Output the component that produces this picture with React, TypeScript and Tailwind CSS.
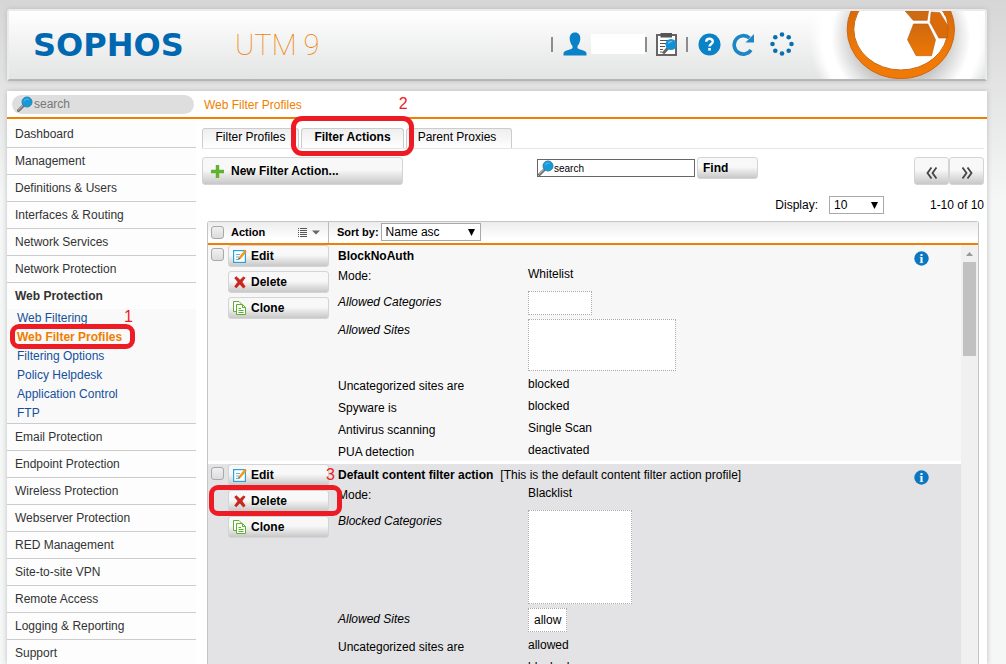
import type { ReactNode } from 'react'

interface Detail {
  label: string
  value?: string
  box?: string
}

interface FilterAction {
  id: string
  name: string
  note?: string
  details: Detail[]
  mark?: boolean
}

const actions: FilterAction[] = [
  {
    id: 'block-no-auth',
    name: 'BlockNoAuth',
    details: [
      { label: 'Mode:', value: 'Whitelist' },
      { label: 'Allowed Categories', box: 'h-6 w-16' },
      { label: 'Allowed Sites', box: 'h-[52px] w-[148px]' },
      { label: 'Uncategorized sites are', value: 'blocked' },
      { label: 'Spyware is', value: 'blocked' },
      { label: 'Antivirus scanning', value: 'Single Scan' },
      { label: 'PUA detection', value: 'deactivated' },
    ],
  },
  {
    id: 'default',
    name: 'Default content filter action',
    note: '[This is the default content filter action profile]',
    mark: true,
    details: [
      { label: 'Mode:', value: 'Blacklist' },
      { label: 'Blocked Categories', box: 'h-[94px] w-[104px]' },
      { label: 'Allowed Sites', box: 'h-6 px-[5px]', value: 'allow' },
      { label: 'Uncategorized sites are', value: 'allowed' },
      { label: 'Spyware is', value: 'blocked' },
    ],
  },
]

const menuTop = ['Dashboard', 'Management', 'Definitions & Users', 'Interfaces & Routing', 'Network Services', 'Network Protection']
const subMenu = ['Web Filtering', 'Web Filter Profiles', 'Filtering Options', 'Policy Helpdesk', 'Application Control', 'FTP']
const menuBottom = [
  'Email Protection',
  'Endpoint Protection',
  'Wireless Protection',
  'Webserver Protection',
  'RED Management',
  'Site-to-site VPN',
  'Remote Access',
  'Logging & Reporting',
  'Support',
]

const buttonBase = 'flex items-center rounded-[3px] border border-[#d4d4d4] bg-linear-to-b from-[#f8f8f8] from-45% to-[#c8c8c8]'
const buttonStyle = `${buttonBase} font-bold text-black`

function Magnifier() {
  return (
    <svg width="16" height="16" viewBox="0 0 16 16" className="shrink-0">
      <path d="M1.5 14.5 L6.5 9.5" stroke="#6f6f6f" strokeWidth="3" strokeLinecap="round" />
      <path d="M1.5 13.8 L6 9.4" stroke="#c9c9c9" strokeWidth="1" strokeLinecap="round" />
      <circle cx="10" cy="6" r="5" fill="#149ad8" stroke="#2a83b4" strokeWidth="1" />
      <path d="M6.5 6 A3.5 3.5 0 0 1 12.6 3.6 Q9 3.6 6.5 6" fill="#45b4e8" />
    </svg>
  )
}

function EditIcon() {
  return (
    <svg width="14" height="14" viewBox="0 0 14 14">
      <rect x=".6" y="1.6" width="11.8" height="11.8" fill="#fff" stroke="#2aa3dc" strokeWidth="1.2" />
      <path d="M3 5.5H7M3 8H6M3 10.5H5.5" stroke="#5bb7e2" />
      <path d="M11.8 .8L13.8 2.7L7.7 9.8L5.300 10.6L6 8Z" fill="#f39a1e" />
      <path d="M5 11L5.8 8.4L7.4 9.9Z" fill="#666" />
    </svg>
  )
}

function DeleteIcon() {
  return (
    <svg width="14" height="14" viewBox="0 0 14 14">
      <path d="M1.2 3L3.4 1.2L7 4.8L10.4 1.4L12.6 2.8L9.4 7L12.6 11.6L10.4 13.4L6.8 9.6L3.4 13.2L1.2 11.4L4.6 7Z" fill="#c8281e" />
    </svg>
  )
}

function CloneIcon() {
  return (
    <svg width="14" height="14" viewBox="0 0 14 14" fill="#fff" stroke="#5cb02c">
      <path d="M.5 .5H6L8.5 3V10.5H.5Z" />
      <path d="M3.5 3.5H9.5L12.5 6.5V13.5H3.5Z" />
      <path d="M9.5 3.5V6.5H12.5M5.5 7.5H8M5.5 9.5H10.5M5.5 11.5H10.5" fill="none" />
    </svg>
  )
}

function InfoIcon() {
  return (
    <svg width="15" height="15" viewBox="0 0 15 15">
      <circle cx="7.5" cy="7.5" r="7.2" fill="#0b77c0" />
      <rect x="6.5" y="3" width="2" height="2" fill="#fff" />
      <rect x="6.5" y="6" width="2" height="6" fill="#fff" />
      <path d="M5.700 6.400H7M5.700 11.600H9.300" stroke="#cfe4f3" strokeWidth=".8" />
    </svg>
  )
}

function Ball() {
  return (
    <svg viewBox="-83 21 530 204" className="block h-[68px] w-[177px]">
      <defs>
        <linearGradient id="ring" x1="0" y1="0" x2="0" y2="1">
          <stop offset="0.2" stopColor="#d0660c" />
          <stop offset="0.75" stopColor="#f07a05" />
        </linearGradient>
        <linearGradient id="hex" x1="0" y1="0" x2="0" y2="1">
          <stop offset="0" stopColor="#cd6a12" />
          <stop offset="1" stopColor="#ee7704" />
        </linearGradient>
        <radialGradient id="glow" gradientUnits="userSpaceOnUse" cx="195" cy="100" r="275">
          <stop offset="0.5" stopColor="#c8c8c8" />
          <stop offset="0.76" stopColor="#fff" />
          <stop offset="0.86" stopColor="#fff" />
          <stop offset="1" stopColor="#fff" stopOpacity="0" />
        </radialGradient>
      </defs>
      <rect x="-83" y="21" width="530" height="204" fill="url(#glow)" />
      <ellipse cx="195" cy="76" rx="161" ry="148" fill="url(#ring)" stroke="#c96a1c" strokeWidth="3" />
      <ellipse cx="195" cy="76" rx="141" ry="122" fill="#fff" stroke="#c96a1c" strokeWidth="3" />
      <g stroke="#c06010" strokeWidth="2">
        <polygon points="233,60 276,60 299,107 287,155 241,155 215,107" fill="url(#hex)" />
        <polygon points="208,21 278,21 274,49 232,49" fill="#cd6a12" />
        <path d="M286 24L312 26L337 67L335 102H309L283 55Z" fill="#d96b0b" />
      </g>
      <path d="M316 21L330 40L335 62L320 28Z" fill="#fff" />
    </svg>
  )
}

function Separator() {
  return <span className="h-[15px] w-[2px] bg-[#8c8c8c]" />
}

function HeaderButton({ label, children }: { label: string; children: ReactNode }) {
  return (
    <button type="button" aria-label={label} className="block">
      {children}
    </button>
  )
}

function Header() {
  return (
    <header className="flex h-[72px] overflow-hidden rounded-t-[3px] border-2 border-[#ebebeb] border-b-[#b5b5b5] bg-linear-to-b from-white to-[#e3e4e4] shadow-[0_0_5px_#bbb]">
      <div className="flex flex-1 items-center pl-6">
        <span className="w-[202px] font-['DejaVu_Sans','Liberation_Sans',sans-serif] text-[32px] font-bold text-[#0067b1]">SOPHOS</span>
        <span className="font-[Roboto,sans-serif] text-[29px] font-thin text-[#ee7f00]">UTM 9</span>
      </div>
      <div className="flex items-center pb-0.5">
        <Separator />
        <div className="ml-[10px]">
          <HeaderButton label="User">
            <svg width="24" height="24" viewBox="0 0 24 24">
              <path
                d="M12 .5C15.500 .5 17.500 3 17.300 7C17 10 16 12.500 14.500 14V16C16 18 23.500 18 23.500 21.500V23.500H.5V21.500C.5 18 8 18 9.500 16V14C8 12.500 7 10 6.700 7C6.500 3 8.500 .5 12 .5Z"
                fill="#0a82c8"
              />
            </svg>
          </HeaderButton>
        </div>
        <span className="ml-1 h-5 w-[54px] bg-white" />
        <Separator />
        <div className="px-[9px]">
          <HeaderButton label="Log">
            <svg width="21" height="24" viewBox="0 0 21 24">
              <rect x="1" y="3" width="19" height="20" fill="#fff" stroke="#666" strokeWidth="2" />
              <path d="M4.500 1H16V5.500H4.500Z" fill="#555" />
              <path d="M4 8.500H12M4 11.500H10M4 14.500H9M4 17.500H7M4 20H6" stroke="#555" />
              <path d="M7 21.500L12 16" stroke="#666" strokeWidth="3" />
              <circle cx="15" cy="12.500" r="5.500" fill="#1590d4" />
              <path d="M11.500 12A3.500 3.500 0 0 1 17 9.500Z" fill="#5fbbe8" />
            </svg>
          </HeaderButton>
        </div>
        <Separator />
        <div className="flex items-center gap-[11px] pl-[10px]">
          <HeaderButton label="Help">
            <svg width="23" height="23" viewBox="0 0 23 23">
              <circle cx="11.500" cy="11.500" r="11" fill="#0a82c8" />
              <path d="M8.200 8.800C8.200 4.800 14.800 4.800 14.800 8.600C14.800 11 11.500 11 11.500 13.600" fill="none" stroke="#fff" strokeWidth="2.400" />
              <rect x="10.200" y="15" width="2.600" height="2.600" fill="#fff" />
            </svg>
          </HeaderButton>
          <HeaderButton label="Reload">
            <svg width="23" height="23" viewBox="0 0 23 23">
              <path d="M19 17A9.200 9.200 0 1 1 17.500 5" fill="none" stroke="#1d86c4" strokeWidth="3.600" />
              <path d="M22 1V9.500H13.500Z" fill="#1d86c4" />
            </svg>
          </HeaderButton>
          <svg width="24" height="24" viewBox="0 0 24 24" fill="#0a6fae" className="ml-1">
            <circle cx="12" cy="2.500" r="2.300" />
            <circle cx="18.700" cy="5.300" r="2.300" />
            <circle cx="21.500" cy="12" r="2.300" />
            <circle cx="18.700" cy="18.700" r="2.300" />
            <circle cx="12" cy="21.500" r="2.300" />
            <circle cx="5.300" cy="18.700" r="2.300" />
            <circle cx="2.500" cy="12" r="2.300" />
            <circle cx="5.300" cy="5.300" r="2.300" />
          </svg>
        </div>
      </div>
      <div className="ml-[14px]">
        <Ball />
      </div>
    </header>
  )
}

function Sidebar() {
  return (
    <nav className="mt-0.5 w-[189px] shrink-0 bg-[#fdfdfd] text-[#333]">
      {menuTop.map((item) => (
        <a key={item} href="#" className="block h-[27px] border-b border-[#ccc] pl-2 leading-[26px]">
          {item}
        </a>
      ))}
      <a href="#" className="block h-[26px] pl-2 leading-[26px] font-bold">
        Web Protection
      </a>
      <div className="border-b border-[#ccc] bg-[#f9f9f9]">
        {subMenu.map((item) => (
          <div key={item} className="relative h-[19px] pl-[10px] leading-[18px]">
            <a href="#" className={item === 'Web Filter Profiles' ? 'font-bold text-[#ee7f00]' : 'text-[#15509c]'}>
              {item}
            </a>
            {item === 'Web Filtering' && <span className="absolute top-0 left-[117px] text-base leading-4 text-[#ed1c24]">1</span>}
            {item === 'Web Filter Profiles' && (
              <span className="absolute -top-1 left-[3px] h-[25px] w-[125px] rounded-[9px] border-[5px] border-[#ed1c24]" />
            )}
          </div>
        ))}
      </div>
      {menuBottom.map((item) => (
        <a key={item} href="#" className="block h-[27px] border-b border-[#ccc] pl-2 leading-[26px]">
          {item}
        </a>
      ))}
    </nav>
  )
}

function Select({ id, options, className }: { id: string; options: string[]; className: string }) {
  return (
    <span className={`relative inline-block ${className}`}>
      <select id={id} className="block h-[18px] w-full appearance-none border border-[#a9a9a9] bg-white pl-1 text-xs leading-4 text-black">
        {options.map((o) => (
          <option key={o}>{o}</option>
        ))}
      </select>
      <svg width="7" height="7" viewBox="0 0 7 7" className="pointer-events-none absolute top-[6px] right-[6px]">
        <path d="M0 0H7L3.500 7Z" />
      </svg>
    </span>
  )
}

function Tabs() {
  const tab = 'h-5 rounded-t-[3px] border border-b-0 border-[#ccc] bg-linear-to-b from-[#eee] to-white pb-[3px] leading-4 text-black'
  return (
    <div className="flex border-b border-[#e6e6e6]">
      <button type="button" className={`${tab} w-[97px]`}>
        Filter Profiles
      </button>
      <div className="relative ml-0.5">
        <button type="button" className={`${tab} w-[103px] font-bold`}>
          Filter Actions
        </button>
        <span className="absolute -top-3 -left-[10px] h-10 w-[123px] rounded-[11px] border-[5px] border-[#ed1c24]" />
      </div>
      <button type="button" className={`${tab} ml-0.5 w-[106px] pr-1`}>
        Parent Proxies
      </button>
    </div>
  )
}

function PagerButton({ label, path }: { label: string; path: string }) {
  return (
    <button type="button" aria-label={label} className={`${buttonBase} h-7 w-[35px] justify-center pt-[3px]`}>
      <svg width="12" height="12" viewBox="0 0 12 12" fill="none" stroke="#444" strokeWidth="1.800">
        <path d={path} />
      </svg>
    </button>
  )
}

function Toolbar() {
  return (
    <>
      <div className="mt-2 flex items-start">
        <button type="button" className={`${buttonStyle} h-7 w-[201px] gap-[7px] pl-2`}>
          <svg width="13" height="13" viewBox="0 0 13 13">
            <path d="M6.500 0V13M0 6.500H13" stroke="#62b22f" strokeWidth="3.400" />
          </svg>
          New Filter Action...
        </button>
        <div className="mt-0.5 ml-[134px] flex h-[18px] w-[158px] items-center border border-[#666] bg-white">
          <Magnifier />
          <input type="text" aria-label="Search" defaultValue="search" className="w-full min-w-0 pt-0.5 text-[10px] text-black outline-none" />
        </div>
        <button type="button" className={`${buttonStyle} ml-0.5 h-[22px] w-[61px] pl-[5px]`}>
          Find
        </button>
        <div className="ml-auto flex">
          <PagerButton label="Previous page" path="M5.500 .5L1.500 6L5.500 11.500M10.500 .5L6.500 6L10.500 11.500" />
          <PagerButton label="Next page" path="M1.500 .5L5.500 6L1.500 11.500M6.500 .5L10.500 6L6.500 11.500" />
        </div>
      </div>
      <div className="mt-[11px] flex items-center justify-end text-black">
        <label htmlFor="display" className="mr-[11px]">
          Display:
        </label>
        <Select id="display" options={['10', '20', '50']} className="w-[55px]" />
        <span className="w-[100px] text-right">1-10 of 10</span>
      </div>
    </>
  )
}

function Checkbox({ label }: { label: string }) {
  return (
    <input
      type="checkbox"
      aria-label={label}
      className="size-[13px] shrink-0 appearance-none rounded-[3px] border border-[#a8a8a8] bg-linear-to-b from-[#f0f0f0] to-[#dcdcdc]"
    />
  )
}

function DetailRow({ detail, afterBox }: { detail: Detail; afterBox: boolean }) {
  const spaced = detail.box || afterBox
  return (
    <div className={`flex min-h-5 items-start first:mt-0 first:mb-1.5 ${spaced ? 'mt-1' : 'mt-0.5'}`}>
      <dt className={`w-[190px] pt-0.5 ${detail.box ? 'italic' : ''}`}>{detail.label}</dt>
      <dd className={detail.box ? `border border-dotted border-[#aaa] bg-white leading-[22px] ${detail.box}` : ''}>{detail.value}</dd>
    </div>
  )
}

function ActionRow({ action }: { action: FilterAction }) {
  const button = `${buttonStyle} h-[22px] w-[101px] gap-1 pl-1`
  return (
    <div className={`flex border-b-[3px] border-white ${action.mark ? 'bg-[#e3e3e5]' : 'bg-[#f7f7f7]'}`}>
      <div className="flex w-[130px] shrink-0 gap-1 pl-[3px]">
        <span className="mt-[3px] flex">
          <Checkbox label={`Select ${action.name}`} />
        </span>
        <div className="relative flex flex-col gap-1">
          <button type="button" className={button}>
            <EditIcon />
            Edit
          </button>
          <button type="button" className={button}>
            <DeleteIcon />
            Delete
          </button>
          <button type="button" className={button}>
            <CloneIcon />
            Clone
          </button>
          {action.mark && (
            <>
              <span className="absolute top-0.5 left-[98px] text-base leading-[18px] text-[#ed1c24]">3</span>
              <span className="absolute top-[21px] -left-[19px] z-10 h-[31px] w-[133px] rounded-[9px] border-[5px] border-[#ed1c24]" />
            </>
          )}
        </div>
      </div>
      <div className="flex-1 leading-[18px] text-black">
        <h2 className="h-5 pt-0.5">
          <b>{action.name}</b>
          {action.note && <span className="ml-[7px]">{action.note}</span>}
        </h2>
        <dl>
          {action.details.map((d, i) => (
            <DetailRow key={d.label} detail={d} afterBox={i > 0 && !!action.details[i - 1].box} />
          ))}
        </dl>
      </div>
      <button type="button" aria-label="Info" className="mt-[6px] mr-8 self-start">
        <InfoIcon />
      </button>
    </div>
  )
}

function ActionList() {
  return (
    <section className="mt-[7px] mr-[5px] ml-[5px] flex min-h-0 flex-1 flex-col rounded-t-[3px] border border-b-0 border-[#c4c4c4]">
      <div className="flex h-[23px] shrink-0 items-center border-b-2 border-[#ee7f00] bg-linear-to-b from-[#ececec] to-white to-80% text-[11px] font-bold text-black">
        <div className="flex h-full w-[121px] items-center border-r border-[#bbb] pl-[3px]">
          <Checkbox label="Select all" />
          <span className="ml-[7px]">Action</span>
          <svg width="22" height="9" viewBox="0 0 22 9" className="mr-2 ml-auto">
            <path d="M0 .5H1M2 .5H9M0 2.500H1M2 2.500H9M0 4.500H1M2 4.500H9M0 6.500H1M2 6.500H9M0 8.500H1M2 8.500H9" stroke="#555" />
            <path d="M14 2.500H22L18 6.500Z" fill="#666" />
          </svg>
        </div>
        <label htmlFor="sort" className="ml-2">
          Sort by:
        </label>
        <Select id="sort" options={['Name asc', 'Name desc']} className="-mt-0.5 ml-0.5 w-[100px] font-normal" />
      </div>
      <div className="flex min-h-0 flex-1">
        <div className="flex-1 overflow-hidden">
          {actions.map((a) => (
            <ActionRow key={a.id} action={a} />
          ))}
        </div>
        <div className="flex w-[17px] flex-col items-center bg-[#f0f0f0] pt-[7px]">
          <svg width="7" height="4" viewBox="0 0 7 4">
            <path d="M0 4L3.500 0L7 4Z" fill="#999" />
          </svg>
          <div className="mt-[6px] h-[94px] w-[13px] bg-[#c1c1c1]" />
        </div>
      </div>
    </section>
  )
}

export default function App() {
  return (
    <div className="flex h-screen flex-col overflow-hidden bg-linear-to-b from-[#d6d6d6] to-[#f5f6f6] to-30% pt-[9px] pr-[19px] pl-[7px] font-['Liberation_Sans',Arial,sans-serif] text-xs">
      <Header />
      <main className="mt-[10px] flex min-h-0 flex-1 flex-col bg-white shadow-[0_0_5px_#bbb]">
        <div className="flex h-7 shrink-0 items-center border-b-2 border-[#ee7f00]">
          <div className="ml-[5px] flex h-[19px] w-[182px] items-center rounded-full bg-[#dedede] pl-[5px]">
            <Magnifier />
            <input type="text" aria-label="Search menu" defaultValue="search" className="w-[150px] pl-px text-[#777] outline-none" />
          </div>
          <h1 className="ml-[10px] pt-0.5 text-[#ee7f00]">Web Filter Profiles</h1>
          <span className="ml-[97px] text-base leading-5 text-[#ed1c24]">2</span>
        </div>
        <div className="flex min-h-0 flex-1">
          <Sidebar />
          <div className="flex min-w-0 flex-1 flex-col pt-[9px] pr-[3px] pl-[6px]">
            <Tabs />
            <Toolbar />
            <ActionList />
          </div>
        </div>
      </main>
    </div>
  )
}
